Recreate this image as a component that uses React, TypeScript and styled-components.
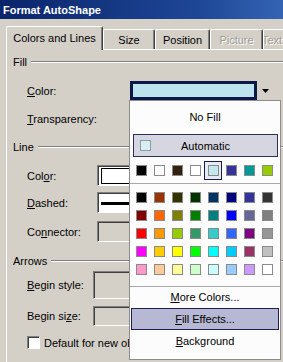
import styled, { createGlobalStyle } from "styled-components";

const GlobalStyle = createGlobalStyle`
  html, body {
    margin: 0;
    padding: 0;
    background: #d4d0c8;
  }
  body {
    font-family: "Liberation Sans", Arial, sans-serif;
    font-size: 11px;
    color: #000;
  }
`;

const Window = styled.div`
  position: relative;
  width: 283px;
  height: 362px;
  overflow: hidden;
  background: #d4d0c8;
  display: flex;
  flex-direction: column;
`;

const TitleBar = styled.div`
  height: 19px;
  padding-left: 3px;
  display: flex;
  align-items: center;
  background: linear-gradient(to right, #0a246a, #1d4796 70%, #3564b4);
  color: #fff;
  font-weight: bold;
  font-size: 11px;
  flex-shrink: 0;
`;

const TabStrip = styled.div`
  display: flex;
  align-items: flex-end;
  height: 23px;
  margin-top: 7px;
  padding-left: 6px;
  flex-shrink: 0;
`;

const Tab = styled.div<{ $w: number; $active?: boolean; $disabled?: boolean }>`
  position: relative;
  z-index: ${(p) => (p.$active ? 2 : 1)};
  width: ${(p) => p.$w}px;
  height: ${(p) => (p.$active ? 24 : 20)}px;
  margin-bottom: ${(p) => (p.$active ? -1 : 0)}px;
  box-sizing: border-box;
  flex-shrink: 0;
  display: flex;
  align-items: center;
  justify-content: center;
  padding-bottom: ${(p) => (p.$active ? 1 : 0)}px;
  background: #d4d0c8;
  border-top: 1px solid #fff;
  border-left: 1px solid #fff;
  border-right: 1px solid #404040;
  box-shadow: inset -1px 0 0 #808080;
  border-radius: 2px 2px 0 0;
  color: ${(p) => (p.$disabled ? "#a09c94" : "#000")};
  text-shadow: ${(p) => (p.$disabled ? "1px 1px 0 #fff" : "none")};
  white-space: nowrap;
  overflow: hidden;
`;

const Panel = styled.div`
  flex: 1;
  margin-left: 6px;
  border-top: 1px solid #fff;
  border-left: 1px solid #fff;
  display: flex;
  flex-direction: column;
  padding-left: 6px;
`;

const GroupHeader = styled.div<{ $mt: number }>`
  display: flex;
  align-items: center;
  gap: 4px;
  height: 14px;
  margin-top: ${(p) => p.$mt}px;
`;

const Etch = styled.div`
  flex: 1;
  height: 0;
  border-top: 1px solid #808080;
  border-bottom: 1px solid #fff;
`;

const Row = styled.div<{ $mt: number; $h: number }>`
  display: flex;
  align-items: center;
  height: ${(p) => p.$h}px;
  margin-top: ${(p) => p.$mt}px;
  padding-left: 14px;
`;

const Label = styled.div<{ $w: number }>`
  width: ${(p) => p.$w}px;
  flex-shrink: 0;
  white-space: nowrap;
`;

const Field = styled.div<{ $bg?: string }>`
  align-self: stretch;
  width: 60px;
  flex-shrink: 0;
  box-sizing: border-box;
  background: ${(p) => p.$bg ?? "#d4d0c8"};
  border-top: 1px solid #808080;
  border-left: 1px solid #808080;
  border-bottom: 1px solid #fff;
  box-shadow: inset 1px 1px 0 #404040;
  display: flex;
  align-items: center;
  padding: 2px 0 1px 3px;
`;

const LineColor = styled.div`
  align-self: stretch;
  flex: 1;
  background: #fff;
  border: 1px solid #000;
`;

const DashLine = styled.div`
  flex: 1;
  height: 3px;
  background: #000;
`;

const Combo = styled.div`
  display: flex;
  align-self: stretch;
  width: 143px;
  flex-shrink: 0;
`;

const ComboSwatch = styled.div`
  flex: 1;
  border: 3px solid #0c1848;
  background: #bde4ec;
`;

const ComboButton = styled.div`
  width: 16px;
  display: flex;
  align-items: center;
  justify-content: center;
  background: #d4d0c8;
`;

const CheckBox = styled.div`
  width: 13px;
  height: 13px;
  box-sizing: border-box;
  flex-shrink: 0;
  background: #fff;
  border-top: 1px solid #808080;
  border-left: 1px solid #808080;
  border-bottom: 1px solid #fff;
  border-right: 1px solid #fff;
  box-shadow: inset 1px 1px 0 #404040;
  margin-right: 4px;
`;

const Popup = styled.div`
  position: absolute;
  left: 129px;
  top: 100px;
  width: 152px;
  height: 260px;
  box-sizing: border-box;
  background: #fcfcfc;
  border: 1px solid #8c8c8c;
  display: flex;
  flex-direction: column;
  z-index: 5;
`;

const MenuItem = styled.div<{ $h: number; $hot?: boolean; $mt?: number }>`
  height: ${(p) => p.$h}px;
  margin: ${(p) => p.$mt ?? 0}px ${(p) => (p.$hot ? 1 : 0)}px 0;
  box-sizing: border-box;
  display: flex;
  align-items: center;
  justify-content: center;
  background: ${(p) => (p.$hot ? "#b7b8d4" : "transparent")};
  border: ${(p) => (p.$hot ? "1px solid #1e1e52" : "none")};
  white-space: nowrap;
`;

const AutoItem = styled.div`
  height: 23px;
  margin: 1px 2px 0 3px;
  box-sizing: border-box;
  display: grid;
  grid-template-columns: 24px 1fr 24px;
  align-items: center;
  background: #d6d6e0;
  border: 1px solid #2e2e5e;
`;

const AutoSwatch = styled.div`
  width: 11px;
  height: 11px;
  box-sizing: border-box;
  margin-left: 6px;
  background: #d8eef2;
  border: 1px solid #8a9aa8;
`;

const RecentRow = styled.div`
  display: flex;
  margin-top: 4px;
  padding-left: 2px;
`;

const Cell = styled.div<{ $sel?: boolean }>`
  width: 18px;
  height: 19px;
  box-sizing: border-box;
  padding: 3px 0 0 3px;
  border: 1px solid ${(p) => (p.$sel ? "#1a1a4e" : "transparent")};
  background: ${(p) => (p.$sel ? "#e4ecf0" : "transparent")};
`;

const Swatch = styled.div<{ $c: string }>`
  width: 11px;
  height: 11px;
  box-sizing: border-box;
  background: ${(p) => p.$c};
  border: 1px solid #8a8a8a;
`;

const Separator = styled.div<{ $mt: number }>`
  height: 1px;
  margin-top: ${(p) => p.$mt}px;
  background: #a8a8a8;
`;

const ColorGrid = styled.div`
  display: grid;
  grid-template-columns: repeat(8, 11px);
  grid-auto-rows: 11px;
  gap: 7px;
  margin-top: 8px;
  padding-left: 6px;
`;

const recent = ["#000000", "#ffffff", "#33210f", "#ffffff", "#c4e8ee", "#333399", "#009999", "#99cc00"];

const palette = [
  "#000000", "#993300", "#333300", "#003300", "#003366", "#000080", "#333399", "#333333",
  "#800000", "#ff6600", "#808000", "#008000", "#008080", "#0000ff", "#666699", "#808080",
  "#ff0000", "#ff9900", "#99cc00", "#339966", "#33cccc", "#3366ff", "#800080", "#969696",
  "#ff00ff", "#ffcc00", "#ffff00", "#00ff00", "#00ffff", "#00ccff", "#993366", "#c0c0c0",
  "#ff99cc", "#ffcc99", "#ffff99", "#ccffcc", "#ccffff", "#99ccff", "#cc99ff", "#ffffff",
];

export default function App() {
  return (
    <>
      <GlobalStyle />
      <Window>
        <TitleBar>Format AutoShape</TitleBar>
        <TabStrip>
          <Tab $w={97} $active>Colors and Lines</Tab>
          <Tab $w={52}>Size</Tab>
          <Tab $w={55}>Position</Tab>
          <Tab $w={53} $disabled>Picture</Tab>
          <Tab $w={40} $disabled>Text Box</Tab>
        </TabStrip>
        <Panel>
          <GroupHeader $mt={5}>
            Fill
            <Etch />
          </GroupHeader>
          <Row $mt={12} $h={19}>
            <Label $w={103}>
              <u>C</u>olor:
            </Label>
            <Combo>
              <ComboSwatch />
              <ComboButton>
                <svg width="7" height="4" viewBox="0 0 7 4">
                  <path d="M0 0h7L3.5 4z" fill="#000" />
                </svg>
              </ComboButton>
            </Combo>
          </Row>
          <Row $mt={9} $h={20}>
            <Label $w={103}>
              <u>T</u>ransparency:
            </Label>
          </Row>

          <GroupHeader $mt={11}>
            Line
            <Etch />
          </GroupHeader>
          <Row $mt={11} $h={21}>
            <Label $w={70}>
              Col<u>o</u>r:
            </Label>
            <Field $bg="#fff">
              <LineColor />
            </Field>
          </Row>
          <Row $mt={6} $h={21}>
            <Label $w={70}>
              <u>D</u>ashed:
            </Label>
            <Field $bg="#fff">
              <DashLine />
            </Field>
          </Row>
          <Row $mt={8} $h={21}>
            <Label $w={70}>
              Co<u>n</u>nector:
            </Label>
            <Field />
          </Row>

          <GroupHeader $mt={12}>
            Arrows
            <Etch />
          </GroupHeader>
          <Row $mt={3} $h={28}>
            <Label $w={66}>
              <u>B</u>egin style:
            </Label>
            <Field />
          </Row>
          <Row $mt={7} $h={20}>
            <Label $w={66}>
              Begin si<u>z</u>e:
            </Label>
            <Field />
          </Row>
          <Row $mt={10} $h={13}>
            <CheckBox />
            <Label $w={200}>Default for new objects</Label>
          </Row>
        </Panel>

        <Popup>
          <MenuItem $h={32}>No Fill</MenuItem>
          <AutoItem>
            <AutoSwatch />
            <span style={{ textAlign: "center" }}>Automatic</span>
            <span />
          </AutoItem>
          <RecentRow>
            {recent.map((c, i) => (
              <Cell key={i} $sel={i === 4}>
                <Swatch $c={c} />
              </Cell>
            ))}
          </RecentRow>
          <Separator $mt={3} />
          <ColorGrid>
            {palette.map((c, i) => (
              <Swatch key={i} $c={c} />
            ))}
          </ColorGrid>
          <Separator $mt={11} />
          <MenuItem $h={20}>
            <u>M</u>ore Colors...
          </MenuItem>
          <MenuItem $h={22} $hot $mt={1}>
            <u>F</u>ill Effects...
          </MenuItem>
          <MenuItem $h={22}>
            <u>B</u>ackground
          </MenuItem>
        </Popup>
      </Window>
    </>
  );
}
